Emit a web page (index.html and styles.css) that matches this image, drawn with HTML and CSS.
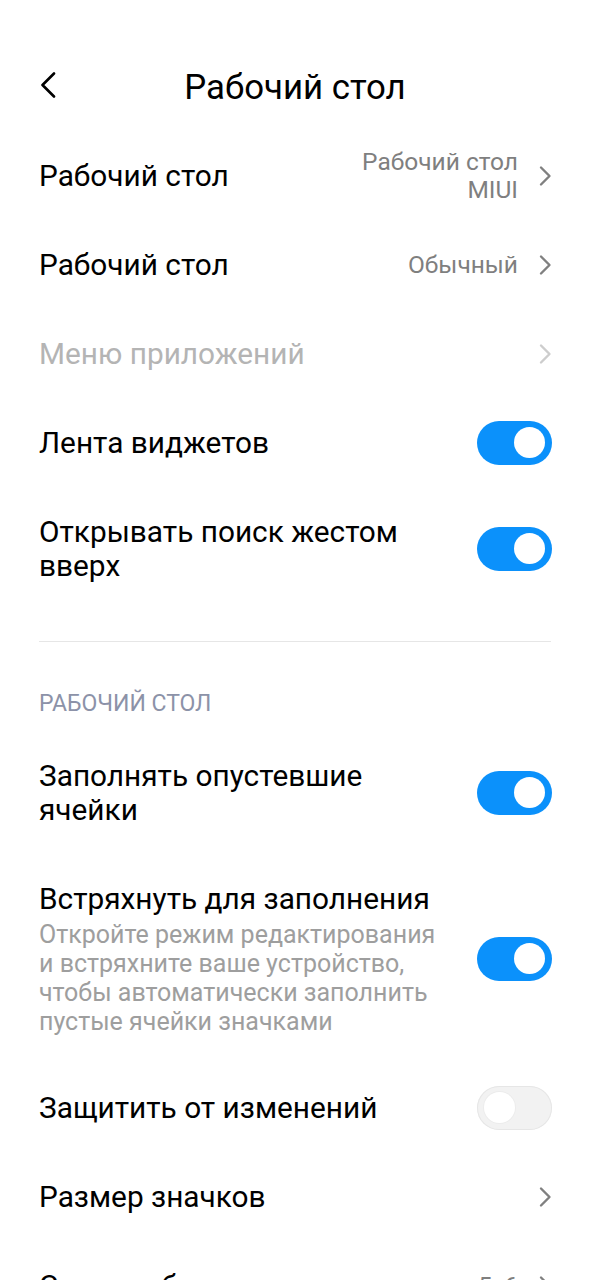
FILE: index.html
```html
<!DOCTYPE html>
<html lang="ru">
<head>
    <meta charset="UTF-8">
    <meta name="viewport" content="width=device-width, initial-scale=1.0">
    <title>Рабочий стол</title>
    <link rel="stylesheet" href="styles.css">
</head>
<body>

    <header class="top-bar">
        <button class="back-button" aria-label="Назад">
            <svg width="16" height="26" viewBox="0 0 16 26"><path d="M14 1.5 L2.5 13 L14 24.5" fill="none" stroke="#000" stroke-width="2.6" stroke-linecap="round" stroke-linejoin="round"/></svg>
        </button>
        <h1 class="page-title">Рабочий стол</h1>
    </header>

    <div class="settings-list">
        <div class="row">
            <div class="row-text"><div class="label">Рабочий стол</div></div>
            <div class="value value-stacked">Рабочий стол<br>MIUI</div>
            <svg class="chevron" viewBox="0 0 14 22"><path d="M3 2.5 L11.5 11 L3 19.5"/></svg>
        </div>
        <div class="row">
            <div class="row-text"><div class="label">Рабочий стол</div></div>
            <div class="value">Обычный</div>
            <svg class="chevron" viewBox="0 0 14 22"><path d="M3 2.5 L11.5 11 L3 19.5"/></svg>
        </div>
        <div class="row disabled">
            <div class="row-text"><div class="label">Меню приложений</div></div>
            <svg class="chevron" viewBox="0 0 14 22"><path d="M3 2.5 L11.5 11 L3 19.5"/></svg>
        </div>
        <div class="row">
            <div class="row-text"><div class="label">Лента виджетов</div></div>
            <span class="switch on"></span>
        </div>
        <div class="row">
            <div class="row-text"><div class="label">Открывать поиск жестом вверх</div></div>
            <span class="switch on"></span>
        </div>
    </div>

    <div class="divider"></div>

    <div class="section-title">РАБОЧИЙ СТОЛ</div>

    <div class="settings-list">
        <div class="row">
            <div class="row-text"><div class="label">Заполнять опустевшие ячейки</div></div>
            <span class="switch on"></span>
        </div>
        <div class="row">
            <div class="row-text">
                <div class="label">Встряхнуть для заполнения</div>
                <div class="hint">Откройте режим редактирования и встряхните ваше устройство, чтобы автоматически заполнить пустые ячейки значками</div>
            </div>
            <span class="switch on"></span>
        </div>
        <div class="row">
            <div class="row-text"><div class="label">Защитить от изменений</div></div>
            <span class="switch"></span>
        </div>
        <div class="row">
            <div class="row-text"><div class="label">Размер значков</div></div>
            <svg class="chevron" viewBox="0 0 14 22"><path d="M3 2.5 L11.5 11 L3 19.5"/></svg>
        </div>
        <div class="row">
            <div class="row-text"><div class="label">Сетка рабочего стола</div></div>
            <div class="value">5x6</div>
            <svg class="chevron" viewBox="0 0 14 22"><path d="M3 2.5 L11.5 11 L3 19.5"/></svg>
        </div>
    </div>

</body>
</html>
```

FILE: styles.css
```css
body {
    font-family: Roboto, "Noto Sans", sans-serif;
    background-color: #fff;
    color: #000;
    margin: 0;
    overflow: hidden;
}
.top-bar {
    position: relative;
    padding: 70px 39px 27px;
    text-align: center;
}
.back-button {
    position: absolute;
    left: 40px;
    top: 72px;
    background: none;
    border: none;
    padding: 0;
    width: 16px;
    height: 26px;
    display: flex;
}
.page-title {
    margin: 0;
    font-size: 34.8px;
    font-weight: 400;
    line-height: 34px;
}
.settings-list {
    display: flex;
    flex-direction: column;
}
.row {
    display: flex;
    align-items: center;
    padding: 27.5px 38px 27.5px 39px;
}
.row-text {
    flex: 1;
    min-width: 0;
}
.label {
    font-size: 29.8px;
    line-height: 34px;
    max-width: 405px;
}
.hint {
    margin-top: 4px;
    font-size: 25px;
    line-height: 29px;
    color: #9e9e9e;
    max-width: 402px;
}
.value {
    font-size: 24.5px;
    line-height: 28px;
    color: #7f7f7f;
    text-align: right;
    margin-right: 20px;
}
.value-stacked {
    margin-top: -11px;
    margin-bottom: -11px;
}
.chevron {
    width: 14px;
    height: 22px;
    fill: none;
    stroke: #808080;
    stroke-width: 2.4;
    stroke-linecap: round;
    stroke-linejoin: round;
}
.disabled .label {
    color: #b4b4b4;
}
.disabled .chevron {
    stroke: #cdcdcd;
}
.switch {
    position: relative;
    width: 75px;
    height: 44px;
    margin: -5px 0;
    border-radius: 22px;
    background-color: #f2f2f2;
    box-shadow: inset 0 0 0 1px #e6e6e6;
    flex-shrink: 0;
}
.switch::after {
    content: "";
    position: absolute;
    top: 6.5px;
    left: 7px;
    width: 31px;
    height: 31px;
    border-radius: 50%;
    background-color: #fff;
    box-shadow: 0 0 0 1px #ececec;
}
.switch.on {
    background-color: #0b91fb;
    box-shadow: none;
}
.switch.on::after {
    left: auto;
    right: 7px;
    box-shadow: none;
}
.divider {
    height: 1px;
    background-color: #e6e6e6;
    margin: 31px 39px 0;
}
.section-title {
    padding: 49px 39px 14px;
    font-size: 23px;
    line-height: 26px;
    color: #8c92a8;
}
```
